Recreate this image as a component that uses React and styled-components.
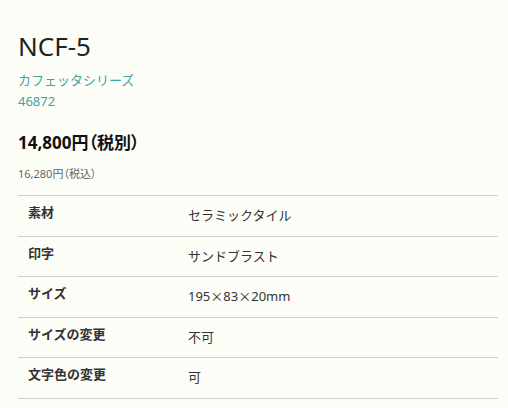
import React from "react";
import styled, { createGlobalStyle } from "styled-components";

const Global = createGlobalStyle`
  html, body { margin: 0; padding: 0; background: #fdfdf8; }
  body { font-family: "Noto Sans", "Noto Sans CJK JP", sans-serif; color: #222; }
`;

const Page = styled.div`
  padding: 26px 10px 0 18px;
  width: 480px;
`;

const Title = styled.h1`
  margin: 0;
  font-size: 26px;
  font-weight: 400;
  line-height: 40px;
  color: #222;
`;

const Series = styled.div`
  margin-top: ${(p) => (p.$first ? "4px" : "0")};
  font-size: 13px;
  line-height: 21px;
  color: #3fa5a0;
`;

const Price = styled.div`
  margin-top: 19px;
  font-size: 17px;
  font-weight: 700;
  line-height: 24px;
  color: #111;
  font-feature-settings: "palt";
`;

const TaxIn = styled.div`
  margin-top: 10px;
  font-size: 11px;
  line-height: 18px;
  color: #666;
  font-feature-settings: "palt";
`;

const Table = styled.div`
  margin-top: 12px;
  border-top: 1px solid #cfcfcb;
`;

const Row = styled.div`
  display: grid;
  grid-template-columns: 170px 1fr;
  height: 39.5px;
  border-bottom: 1px solid #cfcfcb;
  box-sizing: content-box;
`;

const Label = styled.div`
  padding: 7px 0 0 10px;
  font-size: 13px;
  font-weight: 700;
  line-height: 18px;
  color: #333;
`;

const Value = styled.div`
  padding-top: 10px;
  font-size: 13px;
  line-height: 18px;
  color: #333;
`;

const Wide = styled.span`
  font-family: "Noto Sans CJK JP", sans-serif;
`;

const rows = [
  ["素材", "セラミックタイル"],
  ["印字", "サンドブラスト"],
  ["サイズ", <>195<Wide>×</Wide>83<Wide>×</Wide>20mm</>],
  ["サイズの変更", "不可"],
  ["文字色の変更", "可"],
];

export default function App() {
  return (
    <>
      <Global />
      <Page>
        <Title>NCF-5</Title>
        <Series $first>カフェッタシリーズ</Series>
        <Series>46872</Series>
        <Price>14,800円（税別）</Price>
        <TaxIn>16,280円（税込）</TaxIn>
        <Table>
          {rows.map(([k, v]) => (
            <Row key={k}>
              <Label>{k}</Label>
              <Value>{v}</Value>
            </Row>
          ))}
        </Table>
      </Page>
    </>
  );
}
